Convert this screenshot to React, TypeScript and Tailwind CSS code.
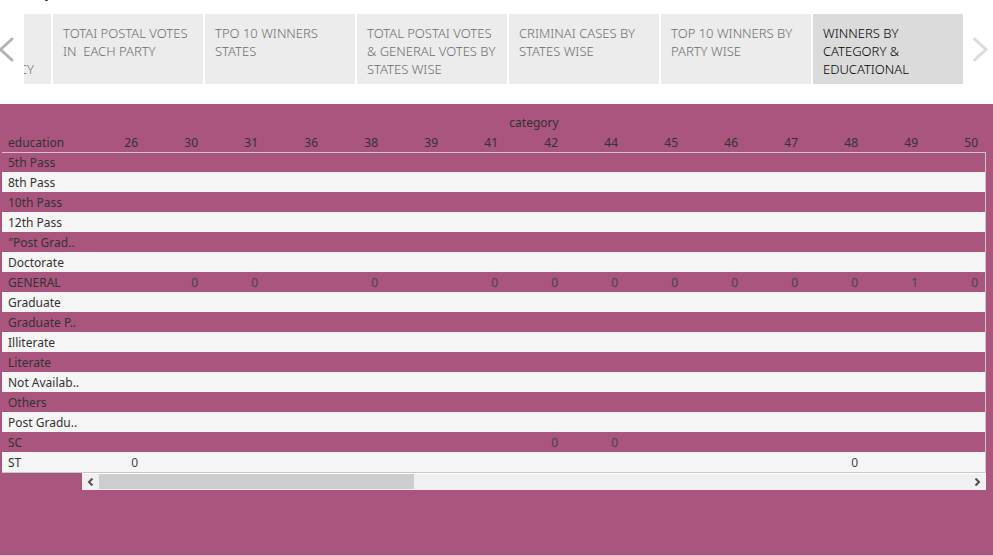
import React from "react";

const tabs = [
  ["TOTAI POSTAL VOTES", "IN\u00a0 EACH PARTY"],
  ["TPO 10 WINNERS", "STATES"],
  ["TOTAL POSTAI VOTES", "& GENERAL VOTES BY", "STATES WISE"],
  ["CRIMINAI CASES BY", "STATES WISE"],
  ["TOP 10 WINNERS BY", "PARTY WISE"],
  ["WINNERS BY", "CATEGORY &", "EDUCATIONAL"],
];

const columns = [26, 30, 31, 36, 38, 39, 41, 42, 44, 45, 46, 47, 48, 49, 50];

const rows: { label: string; values: Record<number, number> }[] = [
  { label: "5th Pass", values: {} },
  { label: "8th Pass", values: {} },
  { label: "10th Pass", values: {} },
  { label: "12th Pass", values: {} },
  { label: "\u2033Post Grad..", values: {} },
  { label: "Doctorate", values: {} },
  {
    label: "GENERAL",
    values: { 30: 0, 31: 0, 38: 0, 41: 0, 42: 0, 44: 0, 45: 0, 46: 0, 47: 0, 48: 0, 49: 1, 50: 0 },
  },
  { label: "Graduate", values: {} },
  { label: "Graduate P..", values: {} },
  { label: "Illiterate", values: {} },
  { label: "Literate", values: {} },
  { label: "Not Availab..", values: {} },
  { label: "Others", values: {} },
  { label: "Post Gradu..", values: {} },
  { label: "SC", values: { 42: 0, 44: 0 } },
  { label: "ST", values: { 26: 0, 48: 0 } },
];

function StoryTabs() {
  const last = tabs.length - 1;
  return (
    <nav aria-label="Story points" className="flex items-center">
      <button type="button" aria-label="Previous" className="flex w-6 shrink-0 items-center">
        <svg width="14" height="26" viewBox="0 0 14 26" fill="none" stroke="#b3b3b3" strokeWidth="3" strokeLinecap="round">
          <path d="M12 3 L0.5 13.5 L12 24" />
        </svg>
      </button>
      <div className="flex h-[70px] min-w-0 flex-1 gap-0.5 overflow-hidden text-[13px] leading-[18px] font-light">
        <button type="button" className="flex min-w-0 flex-1 items-end justify-end overflow-hidden bg-[#ececec] pr-[17px] pb-1.5 text-[#6c6c6c]">
          CY
        </button>
        {tabs.map((lines, i) => (
          <button
            key={i}
            type="button"
            aria-current={i === last ? "true" : undefined}
            className={
              "flex w-[150px] shrink-0 flex-col items-start pt-2.5 pl-2.5 text-left whitespace-nowrap " +
              (i === last ? "bg-[#dbdbdb] text-black" : "bg-[#ececec] text-[#6c6c6c]")
            }
          >
            {lines.map((line) => (
              <span key={line}>{line}</span>
            ))}
          </button>
        ))}
      </div>
      <button type="button" aria-label="Next" className="flex w-[30px] shrink-0 items-center justify-center pl-1">
        <svg width="16" height="26" viewBox="0 0 16 26" fill="none" stroke="#dbdbdb" strokeWidth="3" strokeLinecap="round">
          <path d="M2.5 3 L14 13.5 L2.5 24" />
        </svg>
      </button>
    </nav>
  );
}

function CrossTab() {
  return (
    <table className="w-full table-fixed border-separate border-spacing-0 text-xs leading-[18px] text-[#333]">
      <colgroup>
        <col className="w-20" />
        {columns.map((c) => (
          <col key={c} className="w-[60px]" />
        ))}
        <col />
      </colgroup>
      <thead>
        <tr className="h-5">
          <td className="p-0" />
          <th colSpan={columns.length + 1} className="p-0 pt-0.5 text-center font-normal">
            category
          </th>
        </tr>
        <tr className="h-5">
          <th scope="col" className="p-0 pt-0.5 pl-1.5 text-left font-normal">
            education
          </th>
          {columns.map((c) => (
            <th key={c} scope="col" className="p-0 pt-0.5 pr-1 text-right font-normal">
              {c}
            </th>
          ))}
          <td className="p-0" />
        </tr>
      </thead>
      <tbody className="shadow-[inset_-1px_1px_0_#c8c8c8,0_1px_0_#c8c8c8]">
        {rows.map((row) => (
          <tr key={row.label} className="h-5 even:bg-[#f5f5f5]">
            <th scope="row" className="p-0 pt-0.5 pl-1.5 text-left font-normal whitespace-nowrap">
              {row.label}
            </th>
            {columns.map((c) => (
              <td key={c} className="p-0 pt-0.5 pr-1 text-right text-[#444]">
                {row.values[c]}
              </td>
            ))}
            <td className="border-r border-[#c8c8c8] p-0" />
          </tr>
        ))}
      </tbody>
    </table>
  );
}

function ScrollBar() {
  return (
    <div className="mt-px ml-20 flex h-[17px] border-t border-white bg-[#f0f0f0]">
      <button type="button" aria-label="Scroll left" className="flex w-[17px] items-center justify-center">
        <svg width="7" height="8" viewBox="0 0 7 8" fill="none" stroke="#505050" strokeWidth="2">
          <path d="M5.5 0.5 L2 4 L5.5 7.5" />
        </svg>
      </button>
      <div className="min-w-0 flex-1">
        <div className="h-[15px] w-[36.2%] bg-[#cdcdcd]" />
      </div>
      <button type="button" aria-label="Scroll right" className="flex w-[17px] items-center justify-center">
        <svg width="7" height="8" viewBox="0 0 7 8" fill="none" stroke="#505050" strokeWidth="2">
          <path d="M1.5 0.5 L5 4 L1.5 7.5" />
        </svg>
      </button>
    </div>
  );
}

export default function App() {
  return (
    <div className="flex min-h-screen flex-col bg-white font-['Noto_Sans','Open_Sans',sans-serif]">
      <header className="flex h-3.5 items-start overflow-hidden pl-[45px]">
        <h1 className="-mt-[18px] text-sm leading-5 text-[#1b2a41]">y</h1>
      </header>
      <StoryTabs />
      <main className="mt-5 flex-1 border-b border-[#d4c4cc] bg-[#a9557e] pt-2 pr-[7px] pl-0.5">
        <CrossTab />
        <ScrollBar />
      </main>
    </div>
  );
}
